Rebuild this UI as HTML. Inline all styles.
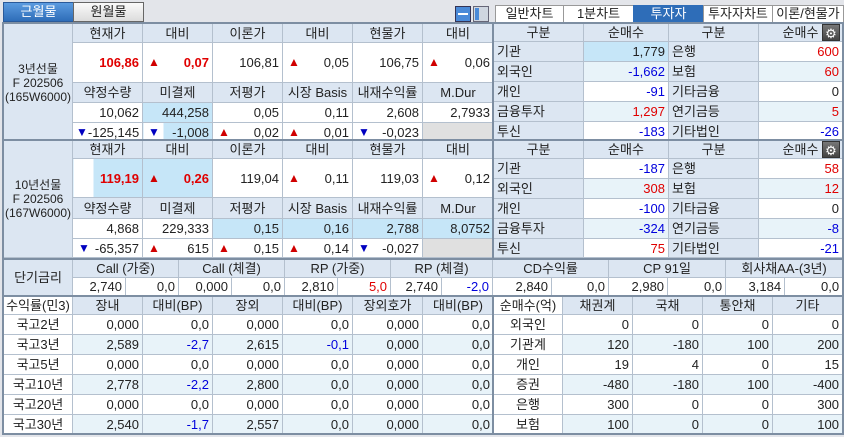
<!DOCTYPE html>
<html><head><meta charset="utf-8">
<style>
*{margin:0;padding:0;box-sizing:border-box}
body{width:844px;height:437px;background:#e3e5ea;font-family:"Liberation Sans","Noto Sans CJK KR",sans-serif;font-size:13px;color:#222;position:relative;overflow:hidden}
table{position:absolute;border-collapse:collapse;table-layout:fixed;background:#fff}
td{border:1px solid #b4c0ce;padding:0 3px;white-space:nowrap;overflow:hidden;text-align:right;line-height:1}
td.h{background:#dce6f2;text-align:center}
td.l{background:#dce6f2;text-align:center;padding:0;font-size:12px}
td.ll{background:#dce6f2;text-align:left}
td.w{text-align:center;background:#fff;padding:0}
.a td.v{background:#fff}
tr.alt td.v{background:#e8f3f9}
.hl{background:#c6e6f8!important}
.g{background:#e0e0e0!important}
.r{color:#e00000}.b{color:#0000dd}
.bold{font-weight:bold;font-size:13px}
.up,.dn{float:left;font-size:12px;margin-left:2px}
.up{color:#d00000}.dn{color:#0000c0}
.tab{position:absolute;top:2px;height:20px;border:1px solid #666;text-align:center;font-size:13px;line-height:18px}
.t2{position:absolute;top:5px;height:18px;border:1px solid #999;background:#fff;text-align:center;font-size:13px;line-height:16px}
.box{position:absolute;border:2px solid #7d8ea2}
</style></head><body>
<div class="tab" style="left:3px;width:71px;background:linear-gradient(#5b9be0,#2e6db8);color:#fff;border-color:#2a5a9a">근월물</div>
<div class="tab" style="left:73px;width:71px;background:linear-gradient(#fafafa,#dcdcdc)">원월물</div>
<div style="position:absolute;left:455px;top:6px;width:16px;height:16px;background:#4a8ad8;border:1px solid #335"></div>
<div style="position:absolute;left:458px;top:13px;width:10px;height:2px;background:#fff"></div>
<div style="position:absolute;left:473px;top:6px;width:16px;height:16px;background:#cfd6e0;border:1px solid #667"></div>
<div style="position:absolute;left:475px;top:8px;width:4px;height:12px;background:#4a8ad8"></div>
<div class="t2" style="left:495px;width:69px">일반차트</div>
<div class="t2" style="left:563px;width:71px">1분차트</div>
<div class="t2" style="left:633px;width:71px;background:#2e6db8;color:#fff;border-color:#2e6db8">투자자</div>
<div class="t2" style="left:703px;width:70px">투자자차트</div>
<div class="t2" style="left:772px;width:72px">이론/현물가</div>

<table style="left:3px;top:23px;width:490px">
<colgroup><col style="width:69px"><col style="width:70px"><col style="width:70px"><col style="width:70px"><col style="width:70px"><col style="width:70px"><col style="width:71px"></colgroup>
<tr style="height:19px"><td class="l" rowspan="5" style="line-height:14px">3년선물<br>F 202506<br>(165W6000)</td><td class="h">현재가</td><td class="h">대비</td><td class="h">이론가</td><td class="h">대비</td><td class="h">현물가</td><td class="h">대비</td></tr>
<tr style="height:40px"><td class="r bold">106,86</td><td class="r bold"><span class="up">▲</span>0,07</td><td>106,81</td><td><span class="up">▲</span>0,05</td><td>106,75</td><td><span class="up">▲</span>0,06</td></tr>
<tr style="height:20px"><td class="h">약정수량</td><td class="h">미결제</td><td class="h">저평가</td><td class="h">시장 Basis</td><td class="h">내재수익률</td><td class="h">M.Dur</td></tr>
<tr style="height:20px"><td>10,062</td><td class="hl">444,258</td><td>0,05</td><td>0,11</td><td>2,608</td><td>2,7933</td></tr>
<tr style="height:19px"><td><span class="dn" style="margin-left:0">▼</span>-125,145</td><td style="background:linear-gradient(to right,#fff 20px,#c6e6f8 20px)"><span class="dn">▼</span>-1,008</td><td><span class="up">▲</span>0,02</td><td><span class="up">▲</span>0,01</td><td><span class="dn">▼</span>-0,023</td><td class="g"></td></tr>
</table>
<table style="left:3px;top:140px;width:490px">
<colgroup><col style="width:69px"><col style="width:70px"><col style="width:70px"><col style="width:70px"><col style="width:70px"><col style="width:70px"><col style="width:71px"></colgroup>
<tr style="height:18px"><td class="l" rowspan="5" style="line-height:14px">10년선물<br>F 202506<br>(167W6000)</td><td class="h">현재가</td><td class="h">대비</td><td class="h">이론가</td><td class="h">대비</td><td class="h">현물가</td><td class="h">대비</td></tr>
<tr style="height:39px"><td class="r bold" style="background:linear-gradient(to right,#fff 20px,#c6e6f8 20px)">119,19</td><td class="r bold hl"><span class="up">▲</span>0,26</td><td>119,04</td><td><span class="up">▲</span>0,11</td><td>119,03</td><td><span class="up">▲</span>0,12</td></tr>
<tr style="height:21px"><td class="h">약정수량</td><td class="h">미결제</td><td class="h">저평가</td><td class="h">시장 Basis</td><td class="h">내재수익률</td><td class="h">M.Dur</td></tr>
<tr style="height:20px"><td>4,868</td><td>229,333</td><td class="hl">0,15</td><td class="hl">0,16</td><td class="hl">2,788</td><td class="hl">8,0752</td></tr>
<tr style="height:19px"><td><span class="dn">▼</span>-65,357</td><td><span class="up">▲</span>615</td><td><span class="up">▲</span>0,15</td><td><span class="up">▲</span>0,14</td><td><span class="dn">▼</span>-0,027</td><td class="g"></td></tr>
</table>

<table class="a" style="left:493px;top:23px;width:349px">
<colgroup><col style="width:90px"><col style="width:85px"><col style="width:90px"><col style="width:84px"></colgroup>
<tr style="height:18px"><td class="h">구분</td><td class="h">순매수</td><td class="h">구분</td><td class="h">순매수</td></tr>
<tr style="height:20px"><td class="ll">기관</td><td class="v hl">1,779</td><td class="ll">은행</td><td class="v r">600</td></tr>
<tr class="alt" style="height:20px"><td class="ll">외국인</td><td class="v b">-1,662</td><td class="ll">보험</td><td class="v r">60</td></tr>
<tr style="height:20px"><td class="ll">개인</td><td class="v b">-91</td><td class="ll">기타금융</td><td class="v">0</td></tr>
<tr class="alt" style="height:20px"><td class="ll">금융투자</td><td class="v r">1,297</td><td class="ll">연기금등</td><td class="v r">5</td></tr>
<tr style="height:19px"><td class="ll">투신</td><td class="v b">-183</td><td class="ll">기타법인</td><td class="v b">-26</td></tr>
</table>
<table class="a" style="left:493px;top:140px;width:349px">
<colgroup><col style="width:90px"><col style="width:85px"><col style="width:90px"><col style="width:84px"></colgroup>
<tr style="height:18px"><td class="h">구분</td><td class="h">순매수</td><td class="h">구분</td><td class="h">순매수</td></tr>
<tr style="height:20px"><td class="ll">기관</td><td class="v b">-187</td><td class="ll">은행</td><td class="v r">58</td></tr>
<tr class="alt" style="height:20px"><td class="ll">외국인</td><td class="v r">308</td><td class="ll">보험</td><td class="v r">12</td></tr>
<tr style="height:20px"><td class="ll">개인</td><td class="v b">-100</td><td class="ll">기타금융</td><td class="v">0</td></tr>
<tr class="alt" style="height:20px"><td class="ll">금융투자</td><td class="v b">-324</td><td class="ll">연기금등</td><td class="v b">-8</td></tr>
<tr style="height:19px"><td class="ll">투신</td><td class="v r">75</td><td class="ll">기타법인</td><td class="v b">-21</td></tr>
</table>
<div style="position:absolute;left:822px;top:24px;width:18px;height:17px;background:linear-gradient(#777,#444);color:#fff;font-size:13px;text-align:center;line-height:17px;border:1px solid #333">⚙</div>
<div style="position:absolute;left:822px;top:141px;width:18px;height:17px;background:linear-gradient(#777,#444);color:#fff;font-size:13px;text-align:center;line-height:17px;border:1px solid #333">⚙</div>

<table style="left:3px;top:259px;width:839px">
<colgroup><col style="width:69px"><col style="width:53px"><col style="width:53px"><col style="width:53px"><col style="width:53px"><col style="width:53px"><col style="width:53px"><col style="width:51px"><col style="width:51px"><col style="width:59px"><col style="width:57px"><col style="width:59px"><col style="width:58px"><col style="width:59px"><col style="width:58px"></colgroup>
<tr style="height:18px"><td class="l" rowspan="2" style="font-size:13px">단기금리</td><td class="h" colspan="2">Call (가중)</td><td class="h" colspan="2">Call (체결)</td><td class="h" colspan="2">RP (가중)</td><td class="h" colspan="2">RP (체결)</td><td class="h" colspan="2">CD수익률</td><td class="h" colspan="2">CP 91일</td><td class="h" colspan="2">회사채AA-(3년)</td></tr>
<tr style="height:18px"><td>2,740</td><td>0,0</td><td>0,000</td><td>0,0</td><td>2,810</td><td class="r">5,0</td><td>2,740</td><td class="b">-2,0</td><td>2,840</td><td>0,0</td><td>2,980</td><td>0,0</td><td>3,184</td><td>0,0</td></tr>
</table>

<table class="a" style="left:3px;top:296px;width:490px">
<colgroup><col style="width:69px"><col style="width:70px"><col style="width:70px"><col style="width:70px"><col style="width:70px"><col style="width:70px"><col style="width:71px"></colgroup>
<tr style="height:18px"><td class="w" style="background:#fff">수익률(민3)</td><td class="h">장내</td><td class="h">대비(BP)</td><td class="h">장외</td><td class="h">대비(BP)</td><td class="h">장외호가</td><td class="h">대비(BP)</td></tr>
<tr style="height:20px"><td class="w">국고2년</td><td class="v">0,000</td><td class="v">0,0</td><td class="v">0,000</td><td class="v">0,0</td><td class="v">0,000</td><td class="v">0,0</td></tr>
<tr class="alt" style="height:20px"><td class="w">국고3년</td><td class="v">2,589</td><td class="v b">-2,7</td><td class="v">2,615</td><td class="v b">-0,1</td><td class="v">0,000</td><td class="v">0,0</td></tr>
<tr style="height:20px"><td class="w">국고5년</td><td class="v">0,000</td><td class="v">0,0</td><td class="v">0,000</td><td class="v">0,0</td><td class="v">0,000</td><td class="v">0,0</td></tr>
<tr class="alt" style="height:20px"><td class="w">국고10년</td><td class="v">2,778</td><td class="v b">-2,2</td><td class="v">2,800</td><td class="v">0,0</td><td class="v">0,000</td><td class="v">0,0</td></tr>
<tr style="height:20px"><td class="w">국고20년</td><td class="v">0,000</td><td class="v">0,0</td><td class="v">0,000</td><td class="v">0,0</td><td class="v">0,000</td><td class="v">0,0</td></tr>
<tr class="alt" style="height:20px"><td class="w">국고30년</td><td class="v">2,540</td><td class="v b">-1,7</td><td class="v">2,557</td><td class="v">0,0</td><td class="v">0,000</td><td class="v">0,0</td></tr>
</table>
<table class="a" style="left:493px;top:296px;width:349px">
<colgroup><col style="width:69px"><col style="width:70px"><col style="width:70px"><col style="width:70px"><col style="width:70px"></colgroup>
<tr style="height:18px"><td class="w">순매수(억)</td><td class="h">채권계</td><td class="h">국채</td><td class="h">통안채</td><td class="h">기타</td></tr>
<tr style="height:20px"><td class="w">외국인</td><td class="v">0</td><td class="v">0</td><td class="v">0</td><td class="v">0</td></tr>
<tr class="alt" style="height:20px"><td class="w">기관계</td><td class="v">120</td><td class="v">-180</td><td class="v">100</td><td class="v">200</td></tr>
<tr style="height:20px"><td class="w">개인</td><td class="v">19</td><td class="v">4</td><td class="v">0</td><td class="v">15</td></tr>
<tr class="alt" style="height:20px"><td class="w">증권</td><td class="v">-480</td><td class="v">-180</td><td class="v">100</td><td class="v">-400</td></tr>
<tr style="height:20px"><td class="w">은행</td><td class="v">300</td><td class="v">0</td><td class="v">0</td><td class="v">300</td></tr>
<tr class="alt" style="height:20px"><td class="w">보험</td><td class="v">100</td><td class="v">0</td><td class="v">0</td><td class="v">100</td></tr>
</table>

<div class="box" style="left:2px;top:22px;width:492px;height:238px"></div>
<div class="box" style="left:492px;top:22px;width:352px;height:238px"></div>
<div style="position:absolute;left:492px;top:139px;width:352px;height:2px;background:#7d8ea2"></div>
<div style="position:absolute;left:2px;top:139px;width:492px;height:2px;background:#7d8ea2"></div>
<div class="box" style="left:2px;top:258px;width:842px;height:39px"></div>
<div class="box" style="left:2px;top:295px;width:492px;height:140px"></div>
<div class="box" style="left:492px;top:295px;width:352px;height:140px"></div>
</body></html>
